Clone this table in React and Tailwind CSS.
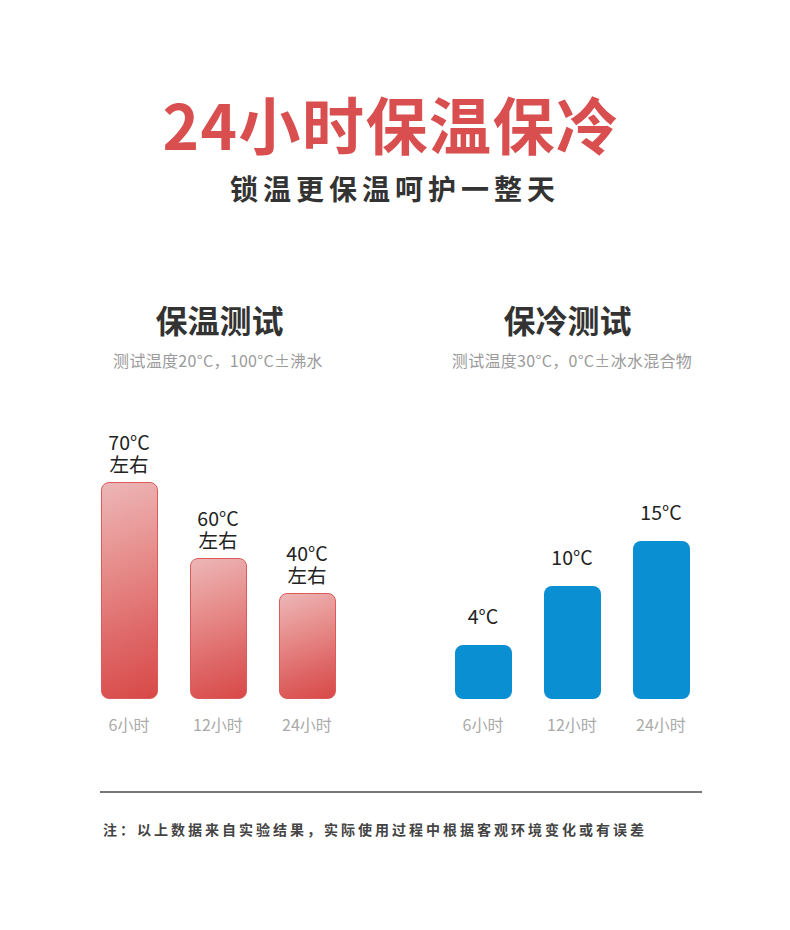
const FONT = { fontFamily: '"Noto Sans CJK SC", "Noto Sans", sans-serif' };

const hot = [
  { temp: "70°C", note: "左右", h: "h-[217px]", label: "6小时" },
  { temp: "60°C", note: "左右", h: "h-[141px]", label: "12小时" },
  { temp: "40°C", note: "左右", h: "h-[106px]", label: "24小时" },
];

const cold = [
  { temp: "4°C", h: "h-[54px]", label: "6小时" },
  { temp: "10°C", h: "h-[113px]", label: "12小时" },
  { temp: "15°C", h: "h-[158px]", label: "24小时" },
];

function Bar({ item, kind }) {
  return (
    <div className="w-[57px] flex flex-col items-center">
      <div
        className={`flex flex-col items-center text-[19.5px] leading-[22px] text-[#222] whitespace-nowrap ${
          kind === "hot" ? "mb-[7px]" : "mb-[18px]"
        }`}
      >
        <span>{item.temp}</span>
        {item.note && <span>{item.note}</span>}
      </div>
      {kind === "hot" ? (
        <div
          className={`w-full ${item.h} rounded-[8px] border border-[#dc5a5a] bg-linear-160 from-[#ecb6b6] via-[#de6767] via-70% to-[#d84848]`}
        />
      ) : (
        <div className={`w-full ${item.h} rounded-[8px] bg-[#0b8fd3]`} />
      )}
    </div>
  );
}

function Chart({ title, desc, items, kind, shift }) {
  return (
    <div className="w-[240px] flex flex-col items-center">
      <h2 className={`text-[32px] leading-none font-bold text-[#333] ${shift}`}>{title}</h2>
      <p className="mt-[17px] text-[16px] leading-none text-[#9a9a9a] tracking-[0.3px] whitespace-nowrap">{desc}</p>
      <div className="mt-[64px] h-[267px] flex items-end gap-[32px]">
        {items.map((it) => (
          <Bar key={it.label} item={it} kind={kind} />
        ))}
      </div>
      <div className="mt-[17px] flex gap-[32px]">
        {items.map((it) => (
          <div key={it.label} className="w-[57px] text-center text-[16px] leading-none text-[#aaa] whitespace-nowrap">
            {it.label}
          </div>
        ))}
      </div>
    </div>
  );
}

export default function App() {
  return (
    <div className="w-[790px] h-[930px] bg-white overflow-hidden" style={FONT}>
      <div className="pt-[92px] flex flex-col items-center">
        <h1 className="mr-[8px] text-[62px] leading-none font-bold text-[#d94f50] tracking-[1.5px]">24小时保温保冷</h1>
        <p className="mt-[20px] text-[28px] leading-none font-bold text-[#333] tracking-[5px]">锁温更保温呵护一整天</p>
      </div>
      <div className="mt-[101px] pl-[98px] flex gap-[114px]">
        <Chart title="保温测试" desc="测试温度20°C，100°C±沸水" items={hot} kind="hot" shift="ml-[3px]" />
        <Chart title="保冷测试" desc="测试温度30°C，0°C±冰水混合物" items={cold} kind="cold" shift="mr-[9px]" />
      </div>
      <div className="mx-[100px] mt-[59px] w-[602px] h-[2px] bg-[#777]" />
      <p className="mt-[29px] pl-[103px] text-[14px] leading-none font-bold text-[#444] tracking-[3px]">
        注：以上数据来自实验结果，实际使用过程中根据客观环境变化或有误差
      </p>
    </div>
  );
}
